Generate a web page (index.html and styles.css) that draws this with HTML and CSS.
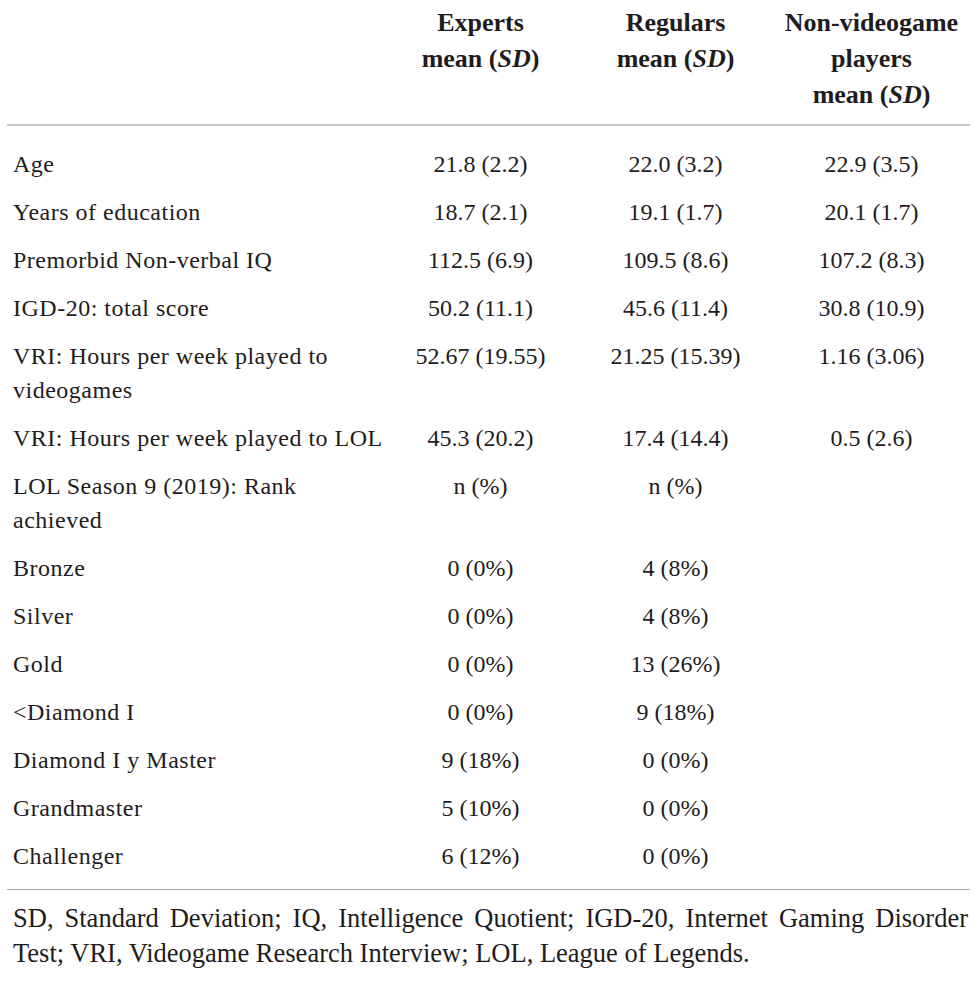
FILE: index.html
```html
<!DOCTYPE html>
<html lang="en">
<head>
<meta charset="utf-8">
<title>Table</title>
<link rel="stylesheet" href="styles.css">
</head>
<body>
<div class="wrap">
  <table class="data">
    <colgroup>
      <col class="c-label">
      <col class="c-val">
      <col class="c-val">
      <col class="c-val c-last">
    </colgroup>
    <thead>
      <tr>
        <th class="h-label"></th>
        <th>Experts<br>mean (<i>SD</i>)</th>
        <th>Regulars<br>mean (<i>SD</i>)</th>
        <th>Non-videogame<br>players<br>mean (<i>SD</i>)</th>
      </tr>
    </thead>
    <tbody>
      <tr><td>Age</td><td>21.8 (2.2)</td><td>22.0 (3.2)</td><td>22.9 (3.5)</td></tr>
      <tr><td>Years of education</td><td>18.7 (2.1)</td><td>19.1 (1.7)</td><td>20.1 (1.7)</td></tr>
      <tr><td>Premorbid Non-verbal IQ</td><td>112.5 (6.9)</td><td>109.5 (8.6)</td><td>107.2 (8.3)</td></tr>
      <tr><td>IGD-20: total score</td><td>50.2 (11.1)</td><td>45.6 (11.4)</td><td>30.8 (10.9)</td></tr>
      <tr><td>VRI: Hours per week played to<br>videogames</td><td>52.67 (19.55)</td><td>21.25 (15.39)</td><td>1.16 (3.06)</td></tr>
      <tr><td>VRI: Hours per week played to LOL</td><td>45.3 (20.2)</td><td>17.4 (14.4)</td><td>0.5 (2.6)</td></tr>
      <tr><td>LOL Season 9 (2019): Rank<br>achieved</td><td>n (%)</td><td>n (%)</td><td></td></tr>
      <tr><td>Bronze</td><td>0 (0%)</td><td>4 (8%)</td><td></td></tr>
      <tr><td>Silver</td><td>0 (0%)</td><td>4 (8%)</td><td></td></tr>
      <tr><td>Gold</td><td>0 (0%)</td><td>13 (26%)</td><td></td></tr>
      <tr><td>&lt;Diamond I</td><td>0 (0%)</td><td>9 (18%)</td><td></td></tr>
      <tr><td>Diamond I y Master</td><td>9 (18%)</td><td>0 (0%)</td><td></td></tr>
      <tr><td>Grandmaster</td><td>5 (10%)</td><td>0 (0%)</td><td></td></tr>
      <tr><td>Challenger</td><td>6 (12%)</td><td>0 (0%)</td><td></td></tr>
    </tbody>
  </table>
  <div class="foot">
    <div class="foot-line1">SD, Standard Deviation; IQ, Intelligence Quotient; IGD-20, Internet Gaming Disorder</div>
    <div class="foot-line2">Test; VRI, Videogame Research Interview; LOL, League of Legends.</div>
  </div>
</div>
</body>
</html>
```

FILE: styles.css
```css
html, body {
  margin: 0;
  padding: 0;
  background: #ffffff;
}

body {
  font-family: "Liberation Serif", "Times New Roman", serif;
  color: #1f1c1d;
}

.wrap {
  margin-left: 7px;
  width: 963px;
}

.data {
  width: 963px;
  table-layout: fixed;
  border-collapse: separate;
  border-spacing: 0;
}

.c-label { width: 376px; }
.c-val { width: 195px; }
.c-last { width: 197px; }

.data th {
  font-weight: bold;
  font-size: 26px;
  line-height: 36px;
  text-align: center;
  vertical-align: top;
  padding: 5px 0 11px 0;
  border-bottom: 2px solid #c9c9c9;
}

.data th i {
  font-style: italic;
}

.data td {
  font-size: 24px;
  line-height: 34px;
  padding: 7px 0;
  text-align: center;
  vertical-align: top;
  white-space: nowrap;
}

.data td:first-child {
  text-align: left;
  padding-left: 6px;
  letter-spacing: 0.5px;
}

.data tbody tr:first-child td {
  padding-top: 21px;
}

.data tbody tr:last-child td {
  padding-bottom: 16px;
}

.foot {
  border-top: 1px solid #a9a9a9;
  padding: 11px 2px 0 6px;
  font-size: 26.5px;
  line-height: 35px;
}

.foot-line1 {
  text-align: justify;
  text-align-last: justify;
  white-space: nowrap;
}

.foot-line2 {
  text-align: left;
}
```
